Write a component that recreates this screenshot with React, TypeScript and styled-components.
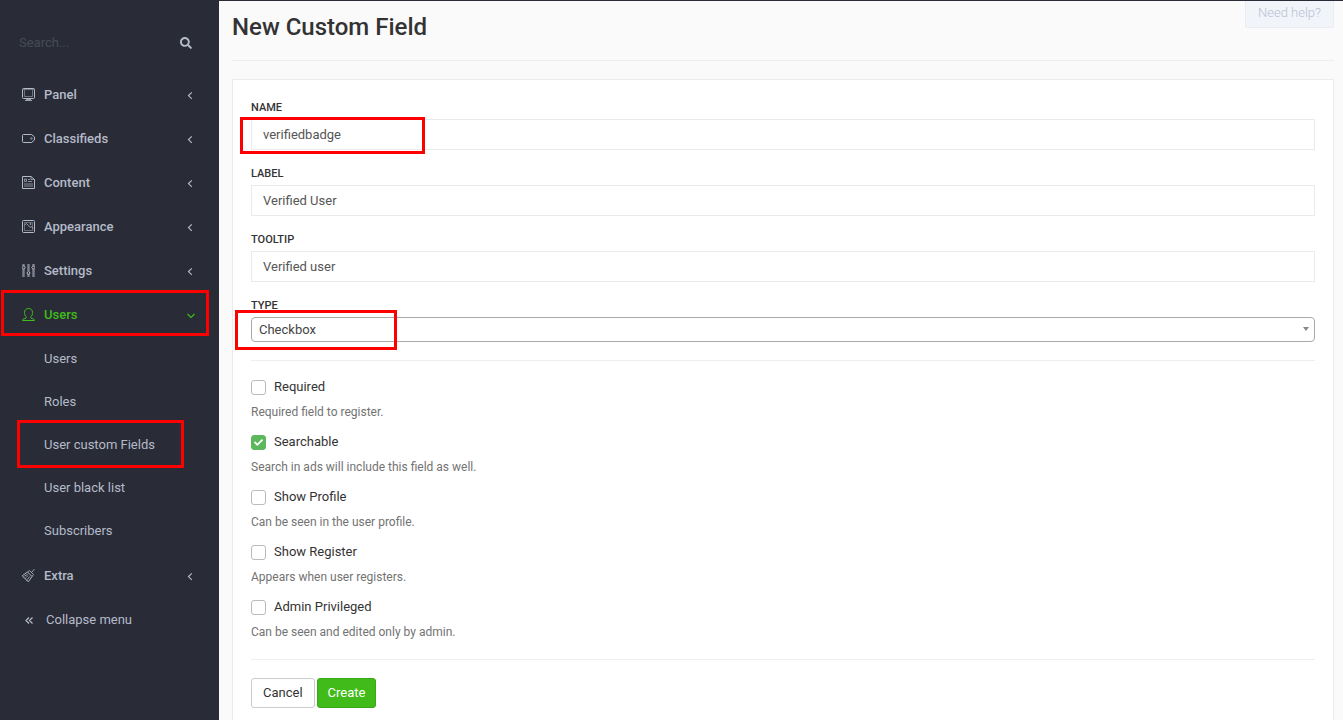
import React, { ReactNode, useState } from 'react';
import styled, { createGlobalStyle, css } from 'styled-components';
import { FaSearch, FaCheck } from 'react-icons/fa';

const GlobalStyle = createGlobalStyle`
  *, *::before, *::after { box-sizing: border-box; }
  body {
    margin: 0;
    background: #fafafa;
    color: #333;
    font-family: Roboto, "Liberation Sans", sans-serif;
    font-size: 13px;
    line-height: 18px;
  }
  button, input, select { font: inherit; }
`;

const Layout = styled.div`
  display: flex;
  min-height: 100vh;
`;

const Sidebar = styled.aside`
  flex: 0 0 219px;
  min-width: 0;
  background: #292c37;
  color: #b5bac9;
`;

const SearchForm = styled.form`
  display: flex;
  align-items: center;
  padding: 28px 27px 15px 19px;
  height: 73px;
`;

const SearchInput = styled.input`
  flex: 1;
  min-width: 0;
  padding: 0;
  border: 0;
  outline: 0;
  background: transparent;
  color: #b5bac9;
  &::placeholder { color: #474a54; opacity: 1; }
`;

const SearchButton = styled.button`
  display: flex;
  padding: 0;
  border: 0;
  background: transparent;
  color: #b5bac9;
`;

const Menu = styled.ul`
  margin: 0;
  padding: 0;
  list-style: none;
`;

const MenuItem = styled.li`
  position: relative;
`;

const MenuLink = styled.a<{ $active?: boolean }>`
  display: flex;
  align-items: center;
  gap: 9px;
  height: 44px;
  padding: 0 24px 0 22px;
  color: ${(p) => (p.$active ? '#41bb19' : '#b5bac9')};
  font-weight: 500;
  text-decoration: none;
`;

const MenuText = styled.span`
  flex: 1;
`;

const SubMenu = styled(Menu)`
  padding-bottom: 2px;
`;

const SubLink = styled.a`
  display: flex;
  align-items: center;
  height: 43px;
  padding-left: 44px;
  color: #b5bac9;
  text-decoration: none;
`;

const CollapseButton = styled.button`
  display: flex;
  align-items: center;
  gap: 11px;
  width: 100%;
  height: 44px;
  padding: 0 22px;
  border: 0;
  background: transparent;
  color: #b5bac9;
`;

/* Red annotation frame laid over a control. */
const Marker = styled.span<{ $inset: string; $width?: number }>`
  position: absolute;
  inset: ${(p) => p.$inset};
  ${(p) => p.$width && css`width: ${p.$width}px;`}
  border: 3px solid #f00;
  pointer-events: none;
`;

const Main = styled.main`
  position: relative;
  flex: 1;
  min-width: 0;
  display: flex;
  flex-direction: column;
  padding: 0 9px 0 13px;
  border-top: 1px solid #292c37;
`;

const HelpLink = styled.a`
  position: absolute;
  top: 0;
  right: 9px;
  padding: 3px 12px 5px;
  border: 1px solid #e9edf2;
  border-top: 0;
  border-radius: 0 0 3px 3px;
  background: #f1f5fa;
  color: #b9c0d3;
  font-weight: 300;
  text-decoration: none;
`;

const Title = styled.h1`
  margin: 0 0 18px;
  padding: 11px 0 17px;
  border-bottom: 1px solid #eee;
  font-size: 24px;
  line-height: 31px;
  font-weight: 500;
`;

const Panel = styled.form`
  flex: 1;
  padding: 19px 18px;
  border: 1px solid #ebebeb;
  border-bottom: 0;
  background: #fff;
`;

const Field = styled.div`
  margin-bottom: 15px;
`;

const Label = styled.label`
  display: block;
  height: 20px;
  font-size: 11px;
  font-weight: 500;
  text-transform: uppercase;
`;

const Control = styled.div`
  position: relative;
`;

const TextInput = styled.input`
  display: block;
  width: 100%;
  height: 31px;
  padding: 0 11px;
  border: 1px solid #ebebeb;
  outline: 0;
  background: #fff;
  color: #555;
`;

const Select = styled.select`
  display: block;
  width: 100%;
  height: 25px;
  padding: 0 7px;
  border: 1px solid #aaa;
  border-radius: 4px;
  appearance: none;
  background: #fff;
  color: #444;
`;

const Caret = styled.span`
  position: absolute;
  top: 10px;
  right: 6px;
  border: solid transparent;
  border-width: 4px 3px 0;
  border-top-color: #888;
  pointer-events: none;
`;

const Rule = styled.hr`
  margin: 18px 0;
  border: 0;
  border-top: 1px solid #eee;
`;

const Options = styled.div`
  display: flex;
  flex-direction: column;
  gap: 13px;
`;

const OptionLabel = styled.label`
  display: flex;
  align-items: center;
  gap: 8px;
  line-height: 16px;
`;

const Tick = styled.span`
  position: relative;
  width: 15px;
  height: 15px;
`;

const TickBox = styled.input`
  display: block;
  width: 15px;
  height: 15px;
  margin: 0;
  border: 1px solid #bbb;
  border-radius: 3px;
  appearance: none;
  background: #fff;
  &:checked { border-color: #5cb85c; background: #5cb85c; }
`;

const TickMark = styled(FaCheck)`
  position: absolute;
  top: 3px;
  left: 3px;
  color: #fff;
  pointer-events: none;
`;

const Hint = styled.p`
  margin: 8px 0 0;
  color: #737373;
  font-size: 12px;
`;

const Buttons = styled.div`
  display: flex;
  gap: 2px;
`;

const Button = styled.button<{ $primary?: boolean }>`
  height: 30px;
  padding: 0 ${(p) => (p.$primary ? 10 : 11)}px;
  border: 1px solid ${(p) => (p.$primary ? '#3aa716' : '#ccc')};
  border-radius: 3px;
  background: ${(p) => (p.$primary ? '#41bb19' : '#fff')};
  color: ${(p) => (p.$primary ? '#fff' : '#333')};
`;

const IconSvg = styled.svg`
  margin-bottom: 2px;
`;

const Icon = ({ children }: { children: ReactNode }) => (
  <IconSvg width="13" height="13" viewBox="1 1 13 13" fill="none" stroke="currentColor" aria-hidden="true">
    {children}
  </IconSvg>
);

const icons: Record<string, ReactNode> = {
  Panel: (
    <>
      <rect x="1.5" y="1.5" width="12" height="10" rx="1" />
      <path d="M2 2.5h11M3.5 3v6.5h8V3" opacity=".5" />
      <path d="M5 12.5h5M4 13.5h7" opacity=".8" />
    </>
  ),
  Classifieds: (
    <>
      <path d="M2.5 3.5h8l3 2.5v3l-3 2.500h-8a1 1 0 0 1-1-1v-6a1 1 0 0 1 1-1z" />
      <circle cx="10.5" cy="7.5" r=".8" opacity=".7" />
    </>
  ),
  Content: (
    <>
      <path d="M1.5 1.5H10l3.5 3v9h-12z" />
      <path d="M10 1.5v3h3.500M3.500 4h2v2.500h-2zM7 4.500h2M7 6.500h4" opacity=".7" />
      <path d="M3 9h9M3 11h9" opacity=".45" strokeWidth="1.5" />
    </>
  ),
  Appearance: (
    <>
      <rect x="1.5" y="1.5" width="12" height="12" rx="1" />
      <path d="M3.5 3.5h8v8h-8z" opacity=".45" />
      <path d="M3.5 6l2-1.500 3.500 4 1.500-1 1.500 2" opacity=".75" />
      <circle cx="9.5" cy="5" r=".5" />
    </>
  ),
  Settings: (
    <>
      <path d="M2.500 1v2M2.500 6v8M7.500 1v7M7.500 11v3M12.500 1v2M12.500 6v8" strokeWidth="2.400" opacity=".6" />
      <circle cx="2.700" cy="4.500" r="1.400" />
      <circle cx="7.500" cy="10" r="1.400" />
      <circle cx="12.300" cy="4.500" r="1.400" />
    </>
  ),
  Users: (
    <path d="M1.500 13.500h12v-.7c-.5-.9-2-1-3.500-1.600-.4-.2-.4-1 0-1.500 1-1 1.500-2.500 1.500-4.200C11.500 3 10 1.500 7.500 1.500S3.500 3 3.500 5.500c0 1.700.5 3.200 1.500 4.200.4.5.4 1.300 0 1.500-1.500.6-3 .7-3.500 1.600z" />
  ),
  Extra: (
    <>
      <path d="M1.500 7.500l5-3.500 4.500 4.500-3.500 5-2-1-1-2-2-1z" />
      <path d="M6.500 4l2-1.500 4 4L11 8.500M10.500 4.500l3-3.500M3.500 8l3-1.500M6.500 11.500l2-3M5 9.500l2-2" opacity=".8" />
    </>
  ),
};

const Chevron = ({ open }: { open?: boolean }) => (
  <svg width="8" height="10" viewBox="0 0 8 10" fill="none" stroke="currentColor" strokeWidth="1.2" aria-hidden="true">
    <path d={open ? 'M.5 4L4 7.500 7.500 4' : 'M4.800 2.300L1.500 5.600l3.300 3.300'} />
  </svg>
);

const sections = ['Panel', 'Classifieds', 'Content', 'Appearance', 'Settings', 'Users', 'Extra'];
const userPages = ['Users', 'Roles', 'User custom Fields', 'User black list', 'Subscribers'];

const options = [
  { id: 'required', label: 'Required', hint: 'Required field to register.' },
  { id: 'searchable', label: 'Searchable', hint: 'Search in ads will include this field as well.' },
  { id: 'show_profile', label: 'Show Profile', hint: 'Can be seen in the user profile.' },
  { id: 'show_register', label: 'Show Register', hint: 'Appears when user registers.' },
  { id: 'admin_privilege', label: 'Admin Privileged', hint: 'Can be seen and edited only by admin.' },
];

export default function App() {
  const [checked, setChecked] = useState<Record<string, boolean>>({ searchable: true });

  return (
    <>
      <GlobalStyle />
      <Layout>
        <Sidebar>
          <SearchForm role="search" onSubmit={(e) => e.preventDefault()}>
            <SearchInput type="text" placeholder="Search..." aria-label="Search" />
            <SearchButton type="submit" aria-label="Search">
              <FaSearch size={12} />
            </SearchButton>
          </SearchForm>
          <nav>
            <Menu>
              {sections.map((name) => {
                const open = name === 'Users';
                return (
                  <li key={name}>
                    <MenuItem as="div">
                      <MenuLink href="#" $active={open}>
                        <Icon>{icons[name]}</Icon>
                        <MenuText>{name}</MenuText>
                        <Chevron open={open} />
                      </MenuLink>
                      {open && <Marker $inset="-3px 10px 1px 1px" />}
                    </MenuItem>
                    {open && (
                      <SubMenu>
                        {userPages.map((page) => (
                          <MenuItem key={page}>
                            <SubLink href="#">{page}</SubLink>
                            {page === 'User custom Fields' && <Marker $inset="-3px 35px -2px 17px" />}
                          </MenuItem>
                        ))}
                      </SubMenu>
                    )}
                  </li>
                );
              })}
            </Menu>
            <CollapseButton type="button">
              <Icon>
                <path d="M8 5.500l-3 3 3 3M11.500 5.500l-3 3 3 3" strokeWidth="1.2" />
              </Icon>
              Collapse menu
            </CollapseButton>
          </nav>
        </Sidebar>
        <Main>
          <HelpLink href="#">Need help?</HelpLink>
          <Title>New Custom Field</Title>
          <Panel onSubmit={(e) => e.preventDefault()}>
            <Field>
              <Label htmlFor="name">Name</Label>
              <Control>
                <TextInput id="name" defaultValue="verifiedbadge" />
                <Marker $inset="-2px auto -4px -11px" $width={185} />
              </Control>
            </Field>
            <Field>
              <Label htmlFor="label">Label</Label>
              <TextInput id="label" defaultValue="Verified User" />
            </Field>
            <Field>
              <Label htmlFor="tooltip">Tooltip</Label>
              <TextInput id="tooltip" defaultValue="Verified user" />
            </Field>
            <Field>
              <Label htmlFor="type">Type</Label>
              <Control>
                <Select id="type" defaultValue="Checkbox">
                  <option>Checkbox</option>
                </Select>
                <Caret />
                <Marker $inset="-7px auto -8px -16px" $width={162} />
              </Control>
            </Field>
            <Rule />
            <Options>
              {options.map((o) => (
                <div key={o.id}>
                  <OptionLabel>
                    <Tick>
                      <TickBox
                        type="checkbox"
                        checked={!!checked[o.id]}
                        onChange={(e) => setChecked({ ...checked, [o.id]: e.target.checked })}
                      />
                      {checked[o.id] && <TickMark size={9} />}
                    </Tick>
                    {o.label}
                  </OptionLabel>
                  <Hint>{o.hint}</Hint>
                </div>
              ))}
            </Options>
            <Rule />
            <Buttons>
              <Button type="button">Cancel</Button>
              <Button type="submit" $primary>Create</Button>
            </Buttons>
          </Panel>
        </Main>
      </Layout>
    </>
  );
}
